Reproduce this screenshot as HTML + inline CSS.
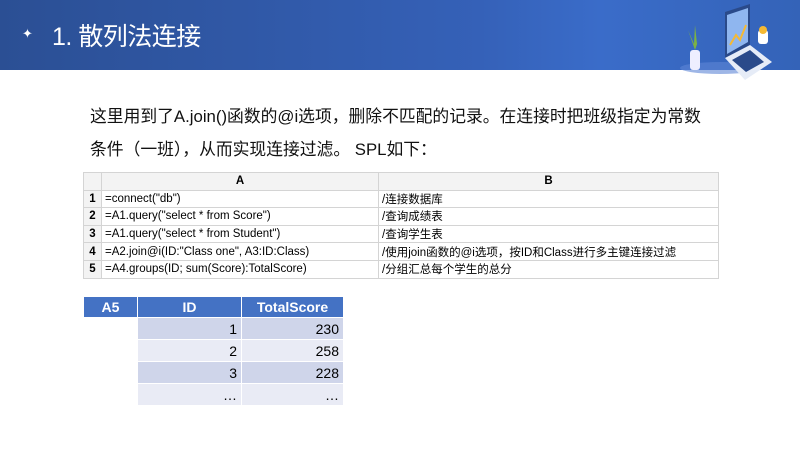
<!DOCTYPE html>
<html><head><meta charset="utf-8"><style>
body{margin:0;width:800px;height:450px;background:#fff;position:relative;overflow:hidden;font-family:"Liberation Sans","Noto Sans CJK SC",sans-serif}
.hdr{position:absolute;left:0;top:0;width:800px;height:70px;background:linear-gradient(90deg,#2b4f94 0%,#3561b8 60%,#3a6cc9 75%,#3463b8 100%)}
.ttl{position:absolute;left:52px;top:17px;color:#fff;font-size:25px;letter-spacing:-0.5px}
.star{position:absolute;left:22px;top:26px;color:#fff;font-size:13px}
.p{position:absolute;left:90px;font-size:16.8px;color:#111}
table{border-collapse:collapse;position:absolute}
.g{left:83px;top:172px;font-size:11.5px}
.g td{border:1px solid #d4d4d4;height:16.6px;padding:0 3px;white-space:nowrap}
.g .n{background:#f3f3f3;font-weight:bold;text-align:center;width:11px}
.g .h{background:#f3f3f3;font-weight:bold;text-align:center}
.r{left:83px;top:296px;font-size:14px}
.r td{border:1px solid #fff;height:20px;padding:0 4px;text-align:right}
.r .th{background:#4472c4;color:#fff;font-weight:bold;text-align:center}
.r .a{background:#cfd5ea}.r .b{background:#e9ebf5}
</style></head><body>
<div class="hdr"><span class="star">✦</span><div class="ttl">1. 散列法连接</div>
<svg style="position:absolute;left:660px;top:0" width="140" height="80" viewBox="0 0 140 80">
<ellipse cx="60" cy="68" rx="40" ry="6" fill="#5d86d6" opacity=".6"/>
<rect x="30" y="50" width="10" height="20" rx="3" fill="#eef"/>
<path d="M35 50 L28 30 L34 44 L35 25 L37 44 L42 30Z" fill="#7cb342"/>
<path d="M65 12 L90 4 L90 45 L65 58Z" fill="#2a4a8a"/><path d="M67 15 L88 8 L88 42 L67 54Z" fill="#8fb6ef"/>
<path d="M70 45 L76 35 L80 40 L86 25" stroke="#f5b933" stroke-width="2" fill="none"/>
<path d="M65 58 L90 45 L112 62 L85 80Z" fill="#e6ecf7"/><path d="M72 60 L90 50 L104 62 L86 72Z" fill="#2a4a8a"/>
<rect x="98" y="30" width="10" height="14" rx="3" fill="#fff"/><circle cx="103" cy="30" r="4" fill="#f5b933"/>
</svg></div>
<div class="p" style="top:103px">这里用到了A.join()函数的@i选项，删除不匹配的记录。在连接时把班级指定为常数</div>
<div class="p" style="top:136px">条件（一班），从而实现连接过滤。 SPL如下：</div>
<table class="g">
<tr><td class="n" style="height:15px"></td><td class="h" style="width:270px">A</td><td class="h" style="width:333px">B</td></tr>
<tr><td class="n">1</td><td>=connect("db")</td><td>/连接数据库</td></tr>
<tr><td class="n">2</td><td>=A1.query("select * from Score")</td><td>/查询成绩表</td></tr>
<tr><td class="n">3</td><td>=A1.query("select * from Student")</td><td>/查询学生表</td></tr>
<tr><td class="n">4</td><td>=A2.join@i(ID:"Class one", A3:ID:Class)</td><td>/使用join函数的@i选项，按ID和Class进行多主键连接过滤</td></tr>
<tr><td class="n">5</td><td>=A4.groups(ID; sum(Score):TotalScore)</td><td>/分组汇总每个学生的总分</td></tr>
</table>
<table class="r">
<tr><td class="th" style="width:45px">A5</td><td class="th" style="width:95px">ID</td><td class="th" style="width:93px">TotalScore</td></tr>
<tr><td style="height:21px"></td><td class="a">1</td><td class="a">230</td></tr>
<tr><td style="height:21px"></td><td class="b">2</td><td class="b">258</td></tr>
<tr><td style="height:21px"></td><td class="a">3</td><td class="a">228</td></tr>
<tr><td style="height:21px"></td><td class="b">…</td><td class="b">…</td></tr>
</table>
</body></html>
